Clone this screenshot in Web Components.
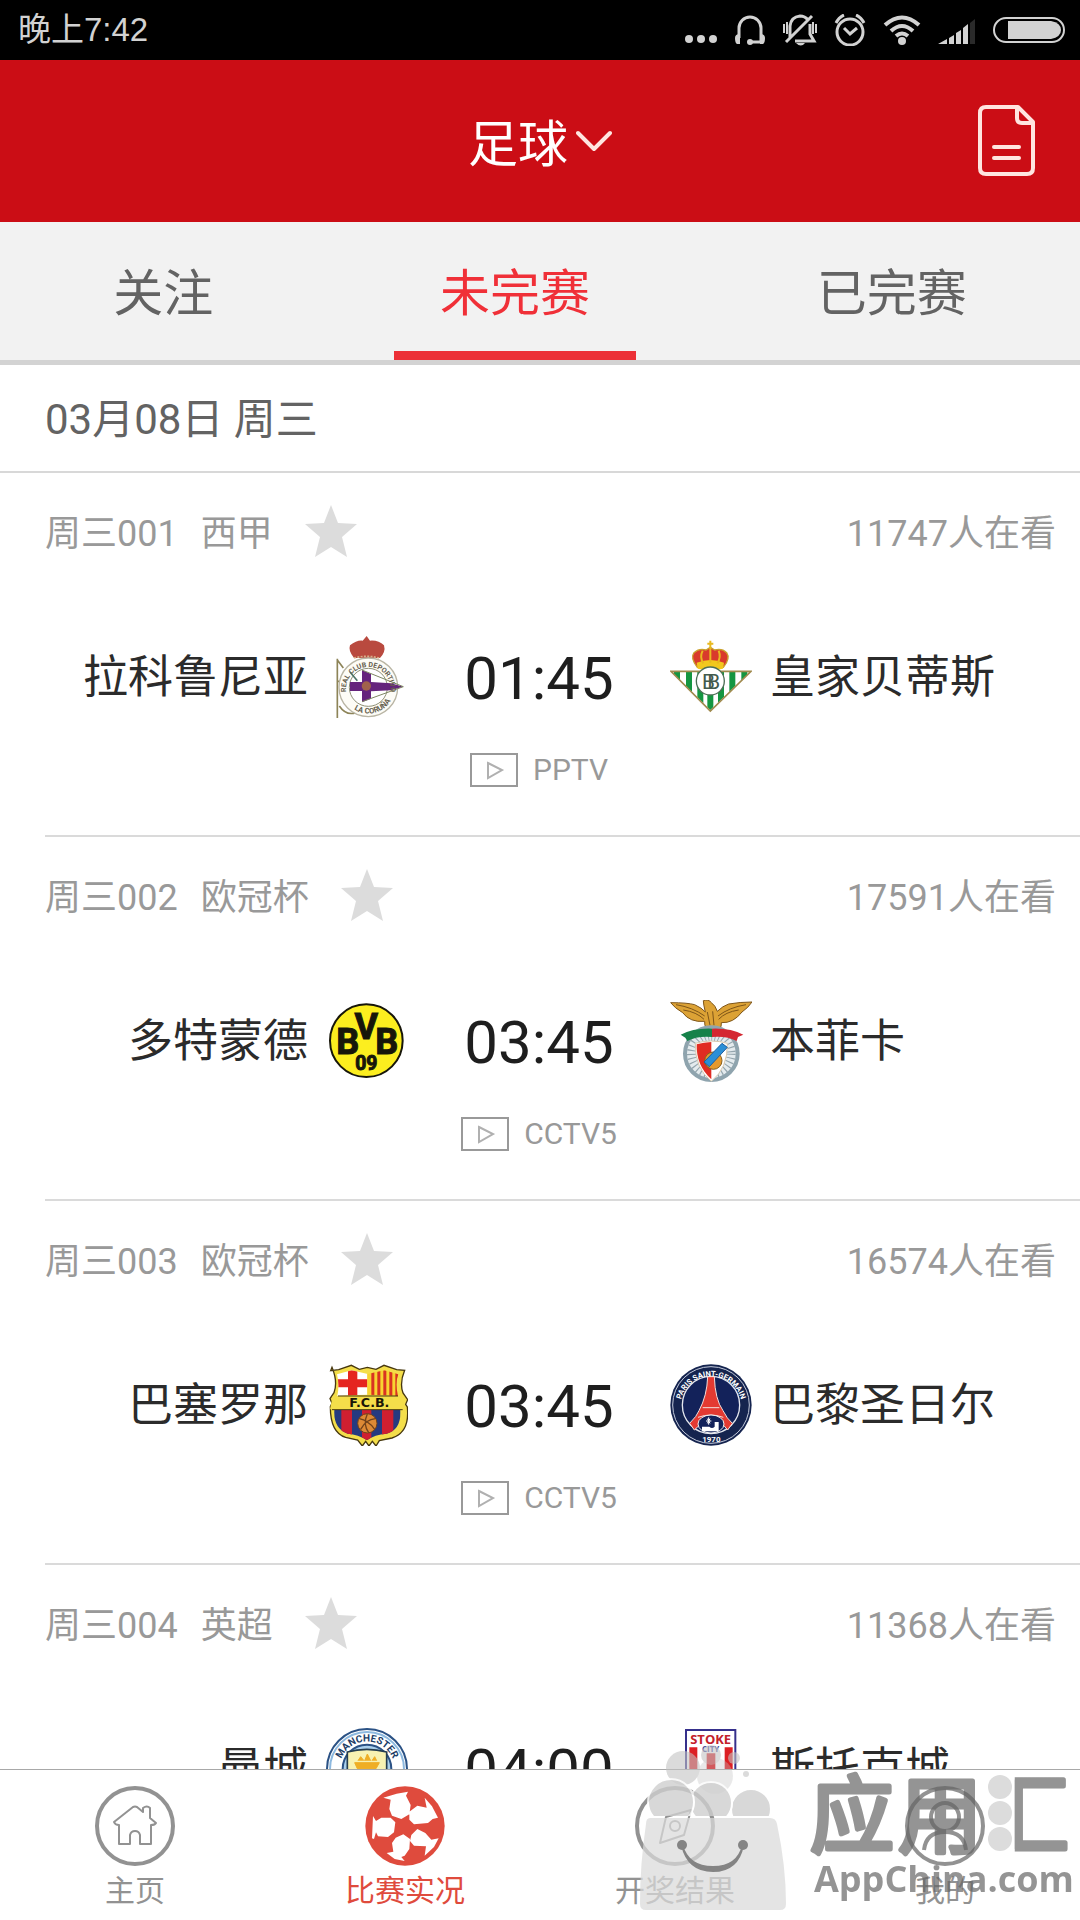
<!DOCTYPE html>
<html lang="zh-CN">
<head>
<meta charset="utf-8">
<meta name="viewport" content="width=device-width, initial-scale=1">
<title>比赛实况</title>
<style>
  body {
    margin: 0;
    background: #fff;
    font-family: Roboto, 'Noto Sans CJK SC', sans-serif;
  }
</style>
</head>
<body>
<score-app></score-app>

<script>
const define = (name, html, setup) => {
  const template = document.createElement('template');
  template.innerHTML = html;

  customElements.define(name, class extends HTMLElement {
    constructor() {
      super();
      this.attachShadow({ mode: 'open' }).appendChild(template.content.cloneNode(true));
    }

    connectedCallback() {
      if (setup) {
        setup(this, this.shadowRoot);
      }
    }
  });
};

// Club crests, all on a 246 x 246 grid
const crests = {
  deportivo: `
    <path d="M34 68V246M34 72l18 24M34 136h24M40 210q20 30 50 20" fill="none" stroke="#8d8458" stroke-width="5"/>
    <path d="M84 66q-18-22-12-38 20-16 38-14l12-14 10 14q26-2 42 14 6 20-12 38z" fill="#b94a3f"/>
    <path d="M84 66q38-10 76 0" fill="none" stroke="#d8b08a" stroke-width="5" stroke-dasharray="6 4"/>
    <circle cx="127" cy="154" r="88" fill="#fdfcf6" stroke="#b9b5a4" stroke-width="4"/>
    <circle cx="127" cy="154" r="57" fill="#fff" stroke="#8f9178" stroke-width="3"/>
    <path d="M72 138h36v-36l27 12v24l60 4 37 10-37 11-60 3v22l-27 11v-34H72z" fill="#65247c"/>
    <path d="M108 102l124 50-124 45" fill="none" stroke="#7d8762" stroke-width="3"/>
    <circle cx="121" cy="150" r="14" fill="#a1624c"/>
    <path d="M72 108l22 26" stroke="#4b7466" stroke-width="5"/>
    <path id="dep-top" d="M62 176a67 67 0 1 1 130 0" fill="none"/>
    <path id="dep-low" d="M73 211a78 78 0 0 0 128-32" fill="none"/>
    <text font-size="21" font-weight="700" fill="#66604f" text-anchor="middle"><textPath href="#dep-top" startOffset="50%">REAL CLUB DEPORTIVO</textPath></text>
    <text font-size="23" font-weight="700" fill="#66604f"><textPath href="#dep-low" startOffset="14">LA CORUÑA</textPath></text>`,
  betis: `
    <clipPath id="betis-clip"><path d="M6 108h234L121 222z"/></clipPath>
    <path d="M3 106h240L121 225z" fill="#fff"/>
    <path d="M12 106h18v120H12zM48 106h18v120H48zM82 106h18v120H82zM112 106h18v120h-18zM144 106h18v120h-18zM178 106h18v120h-18zM214 106h18v120h-18z" fill="#149641" clip-path="url(#betis-clip)"/>
    <path d="M3 106h240L121 225z" fill="none" stroke="#a08a4e" stroke-width="5"/>
    <path d="M82 94q-22-28-10-44 16-14 36-8l13-8 13 8q22-6 36 8 12 18-10 44z" fill="#d93a2c" stroke="#c9a12c" stroke-width="4"/>
    <path d="M80 80q42-16 82 0l-3 18q-38 10-76 0z" fill="#f2c81d"/>
    <path d="M121 14v66M112 23h18M98 44q-10 20 2 38M146 44q8 20-4 38" fill="none" stroke="#e8b91f" stroke-width="6"/>
    <circle cx="121" cy="135" r="42" fill="#fff" stroke="#4d6e56" stroke-width="4"/>
    <text x="96" y="158" font-size="62" fill="#425a4d">B</text>
    <text x="112" y="158" font-size="62" fill="#425a4d">B</text>`,
  dortmund: `
    <circle cx="121" cy="122" r="109" fill="#fcee1f" stroke="#17160a" stroke-width="6"/>
    <g font-family="Roboto" font-weight="700" fill="#17160a" stroke="#17160a" stroke-width="3">
      <text x="65" y="163" font-size="108" text-anchor="middle">B</text>
      <text x="121" y="117" font-size="108" text-anchor="middle">V</text>
      <text x="182" y="163" font-size="108" text-anchor="middle">B</text>
      <text x="121" y="211" font-size="58" text-anchor="middle">09</text>
    </g>`,
  benfica: `
    <path d="M124 92q-22-4-20-28Q60 68 38 38 14 24 2 8q50 0 72 6 22 10 32 22-6-24-6-34 16-6 24 6 12 8 18 26 16-16 34-22 34-6 70-6-10 16-30 30-26 34-62 32 2 22-22 28z" fill="#dca235" stroke="#7e5518" stroke-width="3"/>
    <path d="M18 14q50 8 86 34M40 30q40 6 62 28M228 14q-50 8-84 34M206 30q-40 6-60 28M112 36l8 40M128 34l4 42" fill="none" stroke="#7e5518" stroke-width="3"/>
    <circle cx="124" cy="161" r="79" fill="#e4ebee" stroke="#8fa4ae" stroke-width="12"/>
    <circle cx="124" cy="161" r="54" fill="none" stroke="#94a5ad" stroke-width="38" stroke-dasharray="3 8"/>
    <path d="M32 104q38-20 94-18v25q-44-4-74 12l-6-10z" fill="#16824a"/>
    <path d="M220 104q-38-20-94-18v25q44-4 74 12l4-12z" fill="#d42731"/>
    <path d="M76 130q48-14 96 0 2 74-48 114-50-40-48-114z" fill="#fff" stroke="#d9c9ae" stroke-width="3"/>
    <path d="M80 133q22-6 44-7v112q-46-42-44-105z" fill="#e12c22"/>
    <circle cx="130" cy="182" r="26" fill="#e5992d" stroke="#86601e" stroke-width="3"/>
    <path d="M102 186l54-56 16 12-54 58z" fill="#2a8fd6" stroke="#1e5ea0" stroke-width="3"/>`,
  barcelona: `
    <clipPath id="bar-clip"><path d="M33 31l44-12 48 11 50-11 42 12q-10 24-1 66l7 40q4 60-41 72-36 2-59 20-26-18-58-20-43-16-40-70l9-44q7-30-1-64z"/></clipPath>
    <path d="M14 20l24-3 38-13 24 12 24-6 26 6 24-12 38 13 24 2q-16 38-5 68l14 20-6 14 5 8q8 76-46 93l-38 8-10 16-11-14-10 14-10-14-10 14-14-18-36-8q-46-14-46-92l5-10-6-14 12-18q12-32-6-76z" fill="#f4de4a" stroke="#46370f" stroke-width="4"/>
    <g clip-path="url(#bar-clip)">
      <path d="M20 10h104v90H20z" fill="#fff"/>
      <path d="M66 10h28v90H66zM20 46h104v24H20z" fill="#e52520"/>
      <path d="M124 10h100v90H124z" fill="#f8d331"/>
      <path d="M136 10h9v90h-9zM154 10h9v90h-9zM172 10h9v90h-9zM190 10h9v90h-9zM208 10h9v90h-9z" fill="#d93322"/>
      <path d="M10 138h230v110H10z" fill="#253a80"/>
      <path d="M46 138h32v110H46zM108 138h28v110h-28zM168 138h34v110h-34z" fill="#cf1f30"/>
    </g>
    <path d="M20 97q102-10 206 0l7 39H12z" fill="#f4de4a"/>
    <path d="M18 137h212M36 96h180" stroke="#46370f" stroke-width="3"/>
    <text x="130" y="129" font-size="38" font-weight="700" text-anchor="middle" fill="#1b1607" font-family="DejaVu Sans">F.C.B.</text>
    <circle cx="124" cy="178" r="29" fill="#dd8a35" stroke="#71421a" stroke-width="3"/>
    <path d="M100 164q26 4 46 32M104 196q16-30 44-32M124 150q-14 30 4 56" fill="none" stroke="#71421a" stroke-width="4"/>`,
  psg: `
    <circle cx="123" cy="123" r="122" fill="#15244f"/>
    <circle cx="123" cy="123" r="115" fill="none" stroke="#c4cbdc" stroke-width="3"/>
    <circle cx="123" cy="123" r="86" fill="#13225a" stroke="#e4e7ef" stroke-width="4"/>
    <path d="M113 38h20q2 68 26 102 12 24 28 38l-14 20q-44-60-100 0l-14-20q22-22 28-38 24-44 26-102z" fill="#e43a32" stroke="#f3dedb" stroke-width="3"/>
    <path d="M98 131h50M84 160q38-14 76 0" fill="none" stroke="#f3dedb" stroke-width="3"/>
    <ellipse cx="123" cy="180" rx="39" ry="27" fill="#13225a" stroke="#f3f3f3" stroke-width="3"/>
    <path d="M96 188v14h50v-28h-12v14q-8 8-16 0z" fill="#fff"/>
    <path d="M116 160v22M108 171h16M112 164l8 14M120 164l-8 14" stroke="#fff" stroke-width="3"/>
    <path id="psg-arc" d="M30 130a93 93 0 0 1 186 0" fill="none"/>
    <text font-size="23" font-weight="700" fill="#fff" text-anchor="middle"><textPath href="#psg-arc" startOffset="50%">PARIS SAINT-GERMAIN</textPath></text>
    <text x="124" y="235" font-size="24" font-weight="700" text-anchor="middle" fill="#fff">1970</text>`,
  mancity: `
    <circle cx="123" cy="123" r="120" fill="#fff" stroke="#2b5285" stroke-width="6"/>
    <circle cx="123" cy="123" r="111" fill="none" stroke="#8db9df" stroke-width="6"/>
    <circle cx="123" cy="123" r="73" fill="#a9cfec" stroke="#2b5285" stroke-width="6"/>
    <path d="M64 72q58-16 118 0v74q-8 34-59 50-52-16-59-50z" fill="#f8f2b2" stroke="#263d4f" stroke-width="5"/>
    <path d="M86 104h74l-10 18H94zM96 98l8-12 10 12M116 98l8-20 10 20M138 98l8-12 6 12" fill="#efae25" stroke="#efae25" stroke-width="3"/>
    <path id="mci-arc" d="M43 101a83 83 0 0 1 160 0" fill="none"/>
    <text font-size="30" font-weight="700" fill="#213c66" text-anchor="middle"><textPath href="#mci-arc" startOffset="50%">MANCHESTER</textPath></text>`,
  stoke: `
    <path d="M48 6h148v170q-14 44-74 64-60-20-74-64z" fill="#fff" stroke="#36308c" stroke-width="6"/>
    <path d="M58 58h24v118l-24-12zM110 76h26v156h-26zM164 58h24v106l-24 12z" fill="#dc2024"/>
    <text x="122" y="48" font-size="39" font-weight="700" text-anchor="middle" fill="#c3202b" font-family="Open Sans">STOKE</text>
    <text x="122" y="72" font-size="24" font-weight="700" text-anchor="middle" fill="#434a9b" font-family="Open Sans">CITY</text>`
};

define('club-crest', `
  <style>
    :host {
      display: block;
      width: 82px;
      height: 82px;
    }

    svg {
      display: block;
      width: 100%;
      height: 100%;
    }
  </style>
  <svg viewBox="0 0 246 246" aria-hidden="true"></svg>
`, (host, root) => {
  root.querySelector('svg').innerHTML = crests[host.getAttribute('club')];
});

define('status-bar', `
  <style>
    :host {
      display: flex;
      justify-content: space-between;
      align-items: center;
      height: 60px;
      padding: 0 15px 0 18px;
      background: #000;
      color: #d2d2d2;
      font-size: 33px;
      line-height: 60px;
      font-family: 'Liberation Sans', 'Noto Sans CJK SC', sans-serif;
    }

    .icons {
      display: flex;
      gap: 17px;
    }

    svg {
      display: block;
      fill: none;
      stroke: currentColor;
      stroke-width: 3;
    }

    .solid {
      fill: currentColor;
      stroke: none;
    }
  </style>
  <span>晚上7:42</span>
  <div class="icons">
    <svg width="32" height="32"><g class="solid"><circle cx="4" cy="25" r="4"/><circle cx="16" cy="25" r="4"/><circle cx="28" cy="25" r="4"/></g></svg>
    <svg width="32" height="32"><path d="M5 24V14a11 11 0 0 1 22 0v10M16 28h11v-4"/><path class="solid" d="M1 24q0-4 5-4v10H3q-2-1-2-6zM31 24q0-4-5-4v10h3q2-1 2-6z"/><circle class="solid" cx="16" cy="28" r="3"/></svg>
    <svg width="34" height="32"><path d="M7 24V12Q8 3 17 2q5 0 8 4M27 10v10l4 7H13M29 2L3 28M12 27h2"/><path class="solid" d="M13 29h9q-4 5-9 0z"/><path d="M1 10v9M4 8v12M33 10v9M30 8v12" stroke-width="2"/></svg>
    <svg width="32" height="32"><circle cx="16" cy="18" r="13"/><path d="M10 14l6 6 7-6M2 9q3-6 8-8M30 9q-3-6-8-8"/></svg>
    <svg width="38" height="32"><path d="M2 11q17-15 34 0M8 17q11-10 22 0M13 22q6-5 12 0" stroke-width="4"/><circle class="solid" cx="19" cy="27" r="4"/></svg>
    <svg width="38" height="32"><g class="solid"><path d="M0 30l9-5v5zM11 24l5-3v9h-5zM18 19l5-3v14h-5zM25 14l5-4v20h-5z"/><path d="M32 9l5-4v25h-5z" opacity=".2"/></g></svg>
    <svg width="72" height="32"><rect x="1" y="4" width="70" height="24" rx="12" stroke-width="2"/><path class="solid" d="M15 7h43q10 2 10 9t-10 9H15z"/></svg>
  </div>
`);

define('app-header', `
  <style>
    :host {
      display: grid;
      grid-template-columns: 1fr auto 1fr;
      align-items: center;
      height: 162px;
      padding: 0 45px;
      background: #cb0d15;
      color: #fff;
    }

    button {
      padding: 0;
      border: 0;
      background: none;
      color: inherit;
      font: inherit;
      cursor: pointer;
    }

    .title {
      grid-column: 2;
      display: flex;
      align-items: center;
      gap: 8px;
      font-size: 50px;
      line-height: 60px;
    }

    .title span {
      padding-top: 8px;
    }

    .record {
      justify-self: end;
    }

    svg {
      display: block;
      fill: none;
      stroke: #ffe5e0;
      stroke-width: 4;
      stroke-linecap: round;
      stroke-linejoin: round;
    }
  </style>
  <button class="title" aria-haspopup="listbox">
    <span><slot></slot></span>
    <svg width="36" height="24"><path d="M2 4l16 16L34 4"/></svg>
  </button>
  <button class="record" aria-label="记录">
    <svg width="57" height="72">
      <path d="M8 2h32l15 15v46q0 6-6 6H8q-6 0-6-6V8q0-6 6-6z"/>
      <path d="M39 3v10q0 5 5 5h10M16 42h25M16 53h25"/>
    </svg>
  </button>
`);

define('tab-item', `
  <style>
    :host {
      display: flex;
    }

    button {
      padding: 15px 46px 0;
      border: 0;
      border-bottom: 9px solid transparent;
      background: none;
      color: #636363;
      font: inherit;
      font-size: 50px;
      line-height: 60px;
      cursor: pointer;
    }

    :host([selected]) button {
      color: #f03038;
      border-color: #ec3037;
    }
  </style>
  <button role="tab"><slot></slot></button>
`, (host, root) => {
  root.querySelector('button').setAttribute('aria-selected', host.hasAttribute('selected'));
});

define('tab-bar', `
  <style>
    :host {
      display: flex;
      justify-content: space-around;
      height: 138px;
      background: #f2f2f2;
      border-bottom: 5px solid #d3d3d3;
    }
  </style>
  <slot></slot>
`);

define('match-date', `
  <style>
    :host {
      display: block;
      padding: 4px 45px 0;
      border-bottom: 2px solid #d8d8d8;
      color: #636363;
      font-size: 42px;
      line-height: 102px;
    }
  </style>
  <slot></slot>
`);

define('match-row', `
  <style>
    :host {
      display: block;
      padding-top: 32px;
    }

    .meta {
      display: flex;
      align-items: center;
      height: 52px;
      padding: 0 24px 0 45px;
      color: #999;
      font-size: 36px;
      line-height: 52px;
    }

    .meta > span {
      padding-top: 6px;
    }

    .league {
      margin-left: 23px;
    }

    .star {
      margin-left: 32px;
      padding: 0;
      border: 0;
      background: none;
      color: #dcdcdc;
      cursor: pointer;
    }

    svg {
      display: block;
    }

    .viewers {
      margin-left: auto;
    }

    .teams {
      display: grid;
      grid-template-columns: 1fr 82px 262px 82px 1fr;
      align-items: center;
      margin-top: 79px;
      padding-right: 2px;
      color: #2b2b2b;
      font-size: 45px;
      line-height: 78px;
      text-align: center;
      white-space: nowrap;
    }

    .home {
      padding: 2px 18px 0 0;
      text-align: right;
    }

    .away {
      padding: 2px 0 0 18px;
      text-align: left;
    }

    .time {
      padding-top: 4px;
      color: #1e1e1e;
      font-size: 60px;
    }

    .tv {
      display: flex;
      justify-content: center;
      align-items: center;
      gap: 15px;
      margin-top: 34px;
      padding-right: 2px;
      color: #999;
      font-size: 30px;
      line-height: 36px;
    }

    .line {
      height: 2px;
      margin: 47px 0 0 45px;
      background: #dadada;
    }
  </style>
  <div class="meta">
    <span class="number"></span>
    <span class="league"></span>
    <button class="star" aria-label="关注">
      <svg width="52" height="52" fill="currentColor"><path d="M26 0l7 18 19 1-15 13 5 20-16-10-16 10 5-20L0 19l19-1z"/></svg>
    </button>
    <span class="viewers"><span class="count"></span>人在看</span>
  </div>
  <div class="teams">
    <span class="home"></span>
    <club-crest class="home-crest"></club-crest>
    <time class="time"></time>
    <club-crest class="away-crest"></club-crest>
    <span class="away"></span>
  </div>
  <div class="tv">
    <svg width="48" height="34" fill="none" stroke="#999"><rect x="1" y="1" width="46" height="32" stroke-width="2"/><path d="M18 10l14 7-14 8z" stroke="#b0b0b0" stroke-width="2"/></svg>
    <span class="channel"></span>
  </div>
  <div class="line"></div>
`);

const matches = [
  { number: '周三001', league: '西甲', count: 11747, home: '拉科鲁尼亚', homeCrest: 'deportivo', time: '01:45', away: '皇家贝蒂斯', awayCrest: 'betis', channel: 'PPTV' },
  { number: '周三002', league: '欧冠杯', count: 17591, home: '多特蒙德', homeCrest: 'dortmund', time: '03:45', away: '本菲卡', awayCrest: 'benfica', channel: 'CCTV5' },
  { number: '周三003', league: '欧冠杯', count: 16574, home: '巴塞罗那', homeCrest: 'barcelona', time: '03:45', away: '巴黎圣日尔', awayCrest: 'psg', channel: 'CCTV5' },
  { number: '周三004', league: '英超', count: 11368, home: '曼城', homeCrest: 'mancity', time: '04:00', away: '斯托克城', awayCrest: 'stoke', channel: '' }
];

define('match-list', `
  <style>
    :host {
      display: block;
      overflow: hidden;
    }
  </style>
  <match-date>03月08日 周三</match-date>
`, (host, root) => {
  matches.forEach((match) => {
    const row = document.createElement('match-row');
    ['number', 'league', 'count', 'home', 'time', 'away', 'channel'].forEach((key) => {
      row.shadowRoot.querySelector('.' + key).textContent = match[key];
    });
    row.shadowRoot.querySelector('.home-crest').setAttribute('club', match.homeCrest);
    row.shadowRoot.querySelector('.away-crest').setAttribute('club', match.awayCrest);
    root.appendChild(row);
  });
});

define('nav-item', `
  <style>
    :host {
      display: block;
      flex: 1;
      color: #929292;
    }

    :host([active]) {
      color: #df4b3d;
    }

    a {
      display: flex;
      flex-direction: column;
      align-items: center;
      gap: 5px;
      color: inherit;
      font-size: 30px;
      line-height: 38px;
      text-decoration: none;
    }
  </style>
  <a href="#"><slot name="icon"></slot><slot></slot></a>
`);

define('bottom-nav', `
  <style>
    :host {
      display: flex;
      height: 135px;
      padding-top: 15px;
      border-top: 1px solid #a8a8a8;
      background: #fff;
    }

    svg {
      display: block;
      fill: none;
      stroke: currentColor;
      stroke-width: 2;
      stroke-linejoin: round;
    }

    .ring {
      stroke-width: 4;
    }
  </style>
  <nav-item>
    <svg slot="icon" width="82" height="82">
      <circle class="ring" cx="41" cy="41" r="38"/>
      <path d="M20 37l19-15q2-1 4 0l6 5v-4q4-3 7 0v10l6 5q-1 2-5 2v19H46V50q-1-4-5-4t-5 4v9H25V40q-4 0-5-3z"/>
    </svg>主页
  </nav-item>
  <nav-item active>
    <svg slot="icon" width="82" height="82" viewBox="0 0 246 246">
      <circle cx="123" cy="123" r="119" fill="currentColor" stroke="none"/>
      <path fill="#fff" stroke="none" d="M58 38l40-12 34-6-6 12 14 28-4 28-24 14-28-10-8-20 4-28zM136 80l24-18 28 6-6-30 22 26 18 34-16 4-14 12-42 4-14-14zM27 93l9 15 16-10h28l14 14-4 30-18 14-30-2-6-12-6 20-6-2zM95 158l23-10 20 14-2 30-14 20-10 4 10 12-30-6-24-18 20-4-4-26zM142 150l18-18 24 12 18 20 22-4-14 26-28 26 4-28-36-2-12-14z"/>
    </svg>比赛实况
  </nav-item>
  <nav-item>
    <svg slot="icon" width="82" height="82">
      <circle class="ring" cx="41" cy="41" r="38"/>
      <path d="M32 32l25-7-7 25-24 8z"/><circle cx="41" cy="41" r="5"/>
    </svg>开奖结果
  </nav-item>
  <nav-item>
    <svg slot="icon" width="82" height="82">
      <circle class="ring" cx="41" cy="41" r="38"/>
      <circle class="ring" cx="41" cy="32" r="14"/><path class="ring" d="M20 65q2-18 21-18t21 18"/>
    </svg>我的
  </nav-item>
`);

// Store stamp that floats over the bottom right corner
define('store-stamp', `
  <style>
    :host {
      position: fixed;
      right: 0;
      bottom: 0;
      pointer-events: none;
    }

    svg {
      display: block;
    }
  </style>
  <svg width="460" height="190">
    <defs>
      <clipPath id="rim"><path d="M0 0h460v86H0z"/></clipPath>
      <linearGradient id="fade" gradientUnits="userSpaceOnUse" x1="394" y1="0" x2="395" y2="0">
        <stop offset="0" stop-color="#fff" stop-opacity="0"/><stop offset="1" stop-color="#656565"/>
      </linearGradient>
    </defs>
    <g fill="#c4c4c4" opacity=".6" clip-path="url(#rim)">
      <circle cx="63" cy="38" r="17"/><circle cx="95" cy="46" r="18" opacity=".6"/><circle cx="91" cy="25" r="10"/>
      <circle cx="114" cy="28" r="6"/><circle cx="126" cy="44" r="3"/>
    </g>
    <g fill="#cfcfcf" stroke="#fff" stroke-width="2" opacity=".8" clip-path="url(#rim)">
      <circle cx="131" cy="79" r="20"/><circle cx="91" cy="73" r="21"/><circle cx="51" cy="72" r="23"/>
    </g>
    <path d="M30 88h120q6 0 7 6 9 42 9 80 0 6-6 6H26q-6 0-6-6 0-40 6-80 0-6 4-6z" fill="#dadada" opacity=".73"/>
    <g fill="#848484"><circle cx="62" cy="115" r="5"/><circle cx="123" cy="115" r="5"/><path d="M62 115q6 26 31 26t30-26q-5 22-30 22t-31-22z" stroke="#848484" stroke-width="2"/></g>
    <g opacity=".69" fill="#656565">
      <g font-family="Noto Sans CJK SC" font-size="84" stroke-linejoin="round" stroke-width="5">
        <text x="190" y="116" stroke="#656565">应</text>
        <text x="278" y="116" stroke="#656565">用</text>
        <text x="365" y="116" fill="url(#fade)" stroke="url(#fade)">汇</text>
      </g>
      <text x="194" y="162" font-family="Open Sans" font-size="36" font-weight="700">AppChina.com</text>
    </g>
    <g fill="#dcdcdc"><circle cx="380" cy="57" r="12"/><circle cx="380" cy="83" r="12"/><circle cx="380" cy="109" r="12"/></g>
  </svg>
`);

define('score-app', `
  <style>
    :host {
      display: flex;
      flex-direction: column;
      height: 100vh;
    }

    match-list {
      flex: 1;
      min-height: 0;
    }
  </style>
  <status-bar></status-bar>
  <app-header>足球</app-header>
  <tab-bar role="tablist">
    <tab-item>关注</tab-item>
    <tab-item selected>未完赛</tab-item>
    <tab-item>已完赛</tab-item>
  </tab-bar>
  <match-list></match-list>
  <bottom-nav></bottom-nav>
  <store-stamp></store-stamp>
`);
</script>
</body>
</html>
